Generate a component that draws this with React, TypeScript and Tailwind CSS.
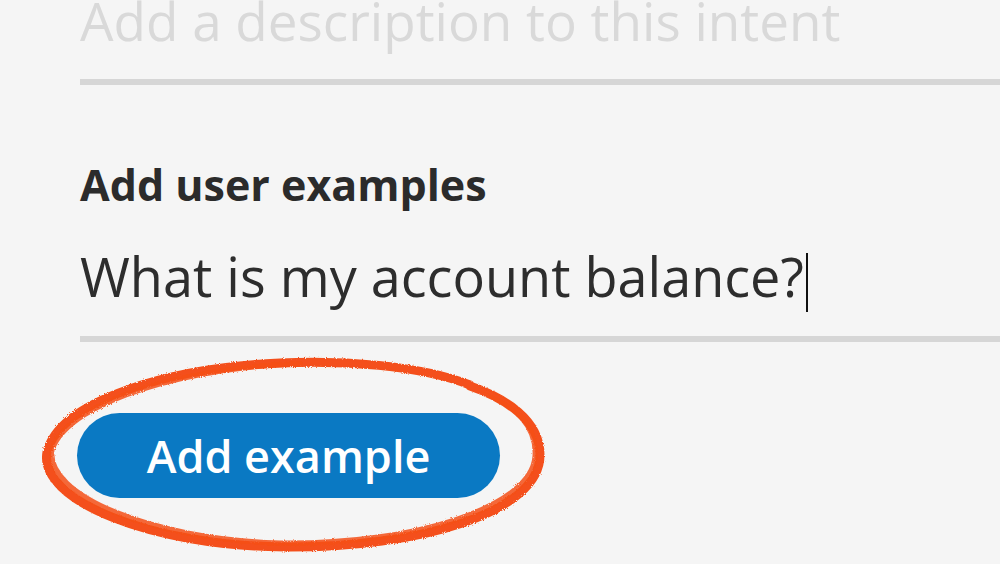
import React from "react";

export default function App() {
  return (
    <div
      className="relative w-[1000px] h-[564px] overflow-hidden bg-[#f5f5f5]"
      style={{ fontFamily: '"Open Sans", "Noto Sans", sans-serif' }}
    >
      <div className="flex flex-col pl-[80px]">
        <div className="h-[79px] flex flex-col justify-end">
          <div className="text-[53px] leading-[58px] text-[#d9d9d9] font-normal whitespace-nowrap mb-[29px]">
            Add a description to this intent
          </div>
        </div>
        <div className="h-[6px] bg-[#d6d6d6]" />
        <div className="mt-[74px] text-[43px] leading-[52px] font-bold text-[#2b2b2b] whitespace-nowrap">
          Add user examples
        </div>
        <div className="mt-[32px] h-[93px] flex items-start">
          <span className="text-[54px] leading-[66px] text-[#2d2d2d] whitespace-nowrap">
            What is my account balance?
          </span>
          <span className="w-[2px] h-[59px] bg-[#111] mt-[10px] ml-[2px]" />
        </div>
        <div className="h-[6px] bg-[#d6d6d6]" />
        <div className="mt-[71px] -ml-[3px]">
          <button className="w-[423px] h-[85px] rounded-full bg-[#0a79c3] text-white text-[45px] font-semibold flex items-center justify-center">
            Add example
          </button>
        </div>
      </div>
      <svg
        className="absolute left-0 top-0 pointer-events-none"
        width="1000"
        height="564"
        viewBox="0 0 1000 564"
      >
        <defs>
          <filter id="rough" x="-10%" y="-10%" width="120%" height="120%">
            <feTurbulence type="fractalNoise" baseFrequency="0.9" numOctaves="2" seed="3" result="n" />
            <feDisplacementMap in="SourceGraphic" in2="n" scale="3" />
          </filter>
        </defs>
        <g filter="url(#rough)" fill="none" stroke="#f4501a" strokeLinecap="round">
          <path
            d="M470 385 C 420 365, 340 360, 280 363 C 170 368, 60 400, 47 452 C 38 500, 150 546, 285 547 C 420 548, 540 512, 540 455 C 540 420, 505 398, 470 386"
            strokeWidth="9"
          />
          <path
            d="M300 364 C 200 366, 70 398, 52 450 C 46 495, 150 539, 280 543 C 410 545, 532 508, 535 456 C 537 424, 510 404, 492 396"
            strokeWidth="5"
            opacity="0.85"
          />
          <path d="M482 390 C 500 396, 512 404, 520 412" strokeWidth="3" opacity="0.6" />
        </g>
      </svg>
    </div>
  );
}
